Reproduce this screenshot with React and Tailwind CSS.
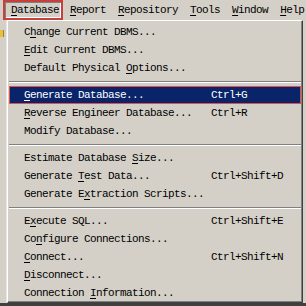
import React from "react";

const U = ({ children }) => (
  <span className="underline decoration-1 underline-offset-[2px]">{children}</span>
);

const items = [
  { t: <>C<U>h</U>ange Current DBMS...</> },
  { t: <><U>E</U>dit Current DBMS...</> },
  { t: <>Default Physical <U>O</U>ptions...</> },
  "sep",
  { t: <><U>G</U>enerate Database...</>, k: "Ctrl+G", hi: true },
  { t: <><U>R</U>everse Engineer Database...</>, k: "Ctrl+R" },
  { t: <>Modify Database...</> },
  "sep",
  { t: <>Estimate Database <U>S</U>ize...</> },
  { t: <>Generate <U>T</U>est Data...</>, k: "Ctrl+Shift+D" },
  { t: <>Generate E<U>x</U>traction Scripts...</> },
  "sep",
  { t: <>E<U>x</U>ecute SQL...</>, k: "Ctrl+Shift+E" },
  { t: <>Co<U>n</U>figure Connections...</> },
  { t: <><U>C</U>onnect...</>, k: "Ctrl+Shift+N" },
  { t: <><U>D</U>isconnect...</> },
  { t: <>Connection <U>I</U>nformation...</> },
];

export default function App() {
  return (
    <div
      className="w-[306px] h-[306px] overflow-hidden bg-[#d4d0c8] text-black text-[11px] tracking-[-0.6px] leading-[18px] flex flex-col"
      style={{ fontFamily: '"Liberation Mono", monospace' }}
    >
      {/* menu bar */}
      <div className="h-[20px] flex items-stretch pl-[3px] shrink-0 whitespace-nowrap">
        <div className="w-[60px] shrink-0 border-[2px] border-[#c8403c] shadow-[inset_1px_1px_0_#808080,inset_-1px_-1px_0_#ffffff] flex items-center pl-[6px]">
          <span><U>D</U>atabase</span>
        </div>
        <div className="ml-[7px] flex items-center shrink-0"><span><U>R</U>eport</span></div>
        <div className="ml-[12px] flex items-center shrink-0"><span><U>R</U>epository</span></div>
        <div className="ml-[12px] flex items-center shrink-0"><span><U>T</U>ools</span></div>
        <div className="ml-[12px] flex items-center shrink-0"><span><U>W</U>indow</span></div>
        <div className="ml-[12px] flex items-center shrink-0"><span><U>H</U>elp</span></div>
      </div>

      <div className="flex h-[283px] shrink-0">
        {/* left strip of window */}
        <div className="w-[7px] relative shrink-0">
          <div className="absolute left-0 top-[10px] w-[4px] h-[7px] bg-[#e8c040] border-r border-[#a08020]" />
          <div className="absolute right-0 top-0 bottom-0 w-[1px] bg-[#e8e6e0]" />
        </div>
        {/* dropdown panel */}
        <div className="w-[296px] shrink-0 border-t border-l border-t-white border-l-white border-r border-b border-r-[#404040] border-b-[#404040] shadow-[inset_-1px_-1px_0_#808080] pt-[2px] pl-[1px] pr-[1px] flex flex-col">
          {items.map((it, i) =>
            it === "sep" ? (
              <div key={i} className="h-[9px] flex flex-col justify-center">
                <div className="border-t border-[#808080]" />
                <div className="border-t border-white" />
              </div>
            ) : (
              <div
                key={i}
                className={
                  "h-[18px] flex items-center pl-[15px] whitespace-nowrap " +
                  (it.hi
                    ? "bg-[#0a246a] text-white outline outline-1 outline-[#e05050] -outline-offset-1"
                    : "")
                }
              >
                <span className="w-[187px] shrink-0">{it.t}</span>
                {it.k && <span>{it.k}</span>}
              </div>
            )
          )}
        </div>
        <div className="flex-1 bg-[#d4d0c8]" />
      </div>
      <div className="flex-1 bg-[#404040]" />
    </div>
  );
}
